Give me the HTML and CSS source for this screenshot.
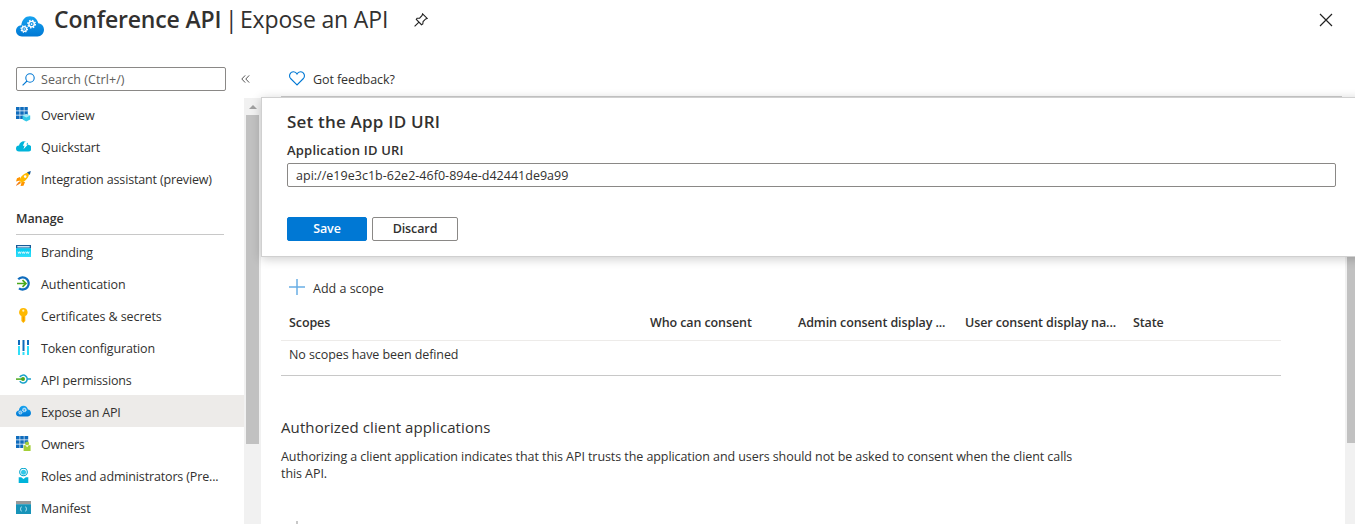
FILE: index.html
```html
<!DOCTYPE html>
<html lang="en">
<head>
<meta charset="utf-8">
<title>Conference API | Expose an API</title>
<link rel="stylesheet" href="styles.css">
</head>
<body>
<svg class="defs" width="0" height="0">
  <defs>
    <linearGradient id="cloudFill" x1="0" y1="0" x2="0" y2="1"><stop offset="0" stop-color="#16a3f0"/><stop offset="1" stop-color="#0078d4"/></linearGradient>
    <linearGradient id="cyanFill" x1="0" y1="0" x2="0" y2="1"><stop offset="0" stop-color="#00c8f0"/><stop offset="1" stop-color="#32e0fb"/></linearGradient>
    <g id="gear"><circle r="3" fill="none" stroke="#fff" stroke-width="1.5"/><circle r="4.1" fill="none" stroke="#fff" stroke-width="1.7" stroke-dasharray="1.6 1.62"/><circle r="1" fill="#fff"/></g>
  </defs>
</svg>
<header class="title-bar">
  <svg class="title-logo" width="28" height="21" viewBox="0 0 28 21">
    <path d="M6 20.5C2.7 20.5 0 18 0 14.8c0-3 2.3-5.3 5.3-5.6C5.900 3.700 9.300.3 14 .3c4.200 0 7.400 2.800 8.300 7 3.300.3 5.700 3.100 5.700 6.500 0 3.700-2.900 6.700-6.500 6.700z" fill="url(#cloudFill)"/>
    <use href="#gear" transform="translate(15.600 8.100) scale(.9)"/>
    <use href="#gear" transform="translate(8.200 13) scale(.77)"/>
  </svg>
  <h1 class="title"><span class="title-app">Conference API</span><span class="title-sep">|</span><span class="title-page">Expose an API</span></h1>
  <svg class="pin" width="14" height="14" viewBox="0 0 14 14" fill="none" stroke="#222" stroke-width="1.100"><path d="M8.600.8l4.600 4.600-1.500.5-2.600 2.600-.3 2.500-1.300.7-5.200-5.200.8-1.200 2.500-.2L8.100 2.500zM4.700 9.300L.6 13.400"/></svg>
  <svg class="close" width="14" height="14" viewBox="0 0 14 14" stroke="#222" stroke-width="1.200"><path d="M1 1l12 12M13 1L1 13"/></svg>
</header>
<div class="body">
  <aside class="sidebar">
    <div class="search-row">
      <div class="search">
        <svg width="13" height="13" viewBox="0 0 13 13" fill="none" stroke="#0078d4" stroke-width="1.100"><circle cx="8" cy="5" r="4.200"/><path d="M5 8L.6 12.400"/></svg>
        <span class="search-hint">Search (Ctrl+/)</span>
      </div>
      <svg class="collapse" width="9" height="8" viewBox="0 0 9 8" fill="none" stroke="#555"><path d="M4.200.4L.8 4l3.400 3.600M8.200.4L4.800 4l3.400 3.600"/></svg>
    </div>
    <div class="nav-wrap">
      <nav class="nav">
        <a class="item"><svg class="icon" viewBox="0 0 15 15"><path fill="#0f6cbd" d="M0 0h3.600v3.600H0zM4.200 0h3.600v3.600H4.200zM8.400 0h3.400v3.600H8.400zM0 4.200h3.600v3.600H0zM4.200 4.200h3.600v3.600H4.200zM8.400 4.200h3.400v3.600H8.400zM0 8.400h3.600V12H0zM4.200 8.400h3V12h-3z"/><path fill="#32c8e8" d="M10.300 7l3.900 1.500v4L10.300 14.600 6.600 12.500v-4z"/><path fill="#a5e8f5" d="M10.300 7l3.900 1.500-3.900 2-3.700-2z"/></svg><span>Overview</span></a>
        <a class="item"><svg class="icon" viewBox="0 0 15 15"><path fill="#00b4da" d="M3 12.500a3 3 0 010-6C3.500 3.900 5.400 2.300 8 2.300c2.300 0 4 1.500 4.400 3.700A3.200 3.200 0 0112 12.500z"/><path fill="#fff" d="M8.800 2.500l3 0-1.400 3h1.500L7.500 10.300l1-3.500H6.800z"/></svg><span>Quickstart</span></a>
        <a class="item"><svg class="icon" viewBox="0 0 15 15"><path fill="#ff9300" d="M4 6L1 7.300 0 10.500l4-1zM9 11l-1.500 3.800-3 .2 1.200-4zM3.800 10L1 14.500 5 12z"/><path fill="#ffb900" d="M3.300 9.500C5 5 8 2 13.300 1.300 13 6.200 10.400 9.700 5.600 11.800z"/><path fill="#185a97" d="M11 1.200L14.800 0l-1 4z"/><circle cx="9.200" cy="5.600" r="1.300" fill="#fff"/><path stroke="#e65c00" d="M.4 14.500l2.700-3.300"/></svg><span class="snug">Integration assistant (preview)</span></a>
        <h2 class="group">Manage</h2>
        <a class="item"><svg class="icon" viewBox="0 0 15 15"><path fill="#185a97" d="M0 1h15v3.500H0z"/><path fill="#c8e4f5" d="M1.300 2h12.400v1.500H1.300z"/><path fill="url(#cyanFill)" d="M0 4.300h15V13H0z"/><path d="M2 7.700l.8 1.800.8-1.800.8 1.800.8-1.800M6 7.700l.8 1.800.8-1.800.8 1.800.8-1.800M10 7.700l.8 1.800.8-1.800.8 1.800.8-1.800" fill="none" stroke="#fff" stroke-width=".8"/></svg><span class="snug">Branding</span></a>
        <a class="item"><svg class="icon" viewBox="0 0 15 15" fill="none"><path d="M2.200 3.200A6.100 6.100 0 1 1 3 12.300" stroke="#0f6cbd" stroke-width="2.300"/><path d="M1 7.500h8.600M6.500 4.200l3.400 3.300-3.400 3.300" stroke="#4aa81c" stroke-width="1.700"/></svg><span>Authentication</span></a>
        <a class="item"><svg class="icon" viewBox="0 0 15 15"><path fill="#ffb900" d="M7.300 0a4.300 4.300 0 00-1.900 8.100v5l1.900 1.900 2-2V8.100A4.300 4.300 0 007.300 0z"/><circle cx="7.300" cy="2.700" r="1.100" fill="#fff3c4"/><path stroke="#ef9400" d="M7.300 8.500v5"/></svg><span>Certificates &amp; secrets</span></a>
        <a class="item"><svg class="icon" viewBox="0 0 15 15"><path fill="#0f6cbd" d="M2 0h2v5H2zM6.500 0h2v11h-2zM11 0h2v5h-2z"/><path fill="#32dff8" d="M2 6h2v9H2zM6.500 12h2v3h-2zM11 6h2v9h-2z"/></svg><span class="snug">Token configuration</span></a>
        <a class="item"><svg class="icon" viewBox="0 0 15 15" fill="none"><path d="M3.800 5A4 4 0 1 1 3.800 9.200M11.200 7.100H15" stroke="#1aa3cc" stroke-width="1.500"/><path d="M0 7.100h7" stroke="#4aa81c" stroke-width="1.500"/><circle cx="7" cy="7.100" r="2" fill="#4aa81c"/></svg><span class="snug">API permissions</span></a>
        <a class="item selected"><svg class="icon" viewBox="0 0 28 28"><path transform="translate(0 3)" d="M6 20.500C2.700 20.500 0 18 0 14.800c0-3 2.300-5.300 5.300-5.600C5.900 3.700 9.300.3 14 .3c4.200 0 7.400 2.800 8.300 7 3.300.3 5.700 3.100 5.700 6.500 0 3.700-2.900 6.700-6.500 6.700z" fill="url(#cloudFill)"/><use href="#gear" transform="translate(15.600 11.100) scale(.9)"/><use href="#gear" transform="translate(8.200 16) scale(.77)"/></svg><span class="snug">Expose an API</span></a>
        <a class="item"><svg class="icon" viewBox="0 0 15 15"><path fill="#0f6cbd" d="M0 0h3.600v3.600H0zM4.200 0h3.600v3.600H4.200zM8.400 0h3.800v3.600H8.400zM0 4.200h3.600v3.600H0zM4.200 4.200h3.600v3.600H4.200zM8.400 4.200h3.800v3.600H8.400zM0 8.400h3.600V12H0zM4.200 8.400h3V12h-3z"/><path fill="#a4cf37" d="M7.600 9.200h7V15h-7z"/><circle cx="11.100" cy="7.500" r="2" fill="#a4cf37"/><path fill="#fff" d="M9.500 9.300h3.200l-1.600 2z"/></svg><span class="tight">Owners</span></a>
        <a class="item"><svg class="icon" viewBox="0 0 15 15"><circle cx="7.500" cy="4" r="3.800" fill="none" stroke="#00a5cc" stroke-width="1.100"/><circle cx="7.500" cy="4.200" r="2.500" fill="#32c8e8"/><path fill="#00b4da" d="M2.700 9.200h2.500L7.500 11l2.300-1.800h2.500V15H2.700z"/></svg><span class="snug">Roles and administrators (Pre...</span></a>
        <a class="item"><svg class="icon" viewBox="0 0 15 15"><path fill="#999" d="M0 1h15v3.200H0z"/><path fill="#1793b8" d="M0 4.200h15V14H0z"/><path d="M5.500 6.800c-1 0-.3 2-1.300 2.200 1 .2.300 2.200 1.300 2.200M9.500 6.800c1 0 .3 2 1.300 2.200-1 .2-.3 2.200-1.300 2.200" fill="none" stroke="#c5eefa"/></svg><span class="snug">Manifest</span></a>
      </nav>
      <div class="scrollbar"><span class="scroll-up"></span><span class="thumb"></span></div>
    </div>
  </aside>
  <main class="main">
    <div class="toolbar">
      <svg width="16" height="15" viewBox="0 0 16 15" fill="none" stroke="#0078d4" stroke-width="1.100"><path d="M8 13.900L1.600 7.500C-.4 5.300.7.700 4.500.7 6.200.7 7.400 1.700 8 2.900 8.600 1.700 9.800.7 11.500.7c3.800 0 4.900 4.600 2.900 6.800z"/></svg>
      <span class="feedback">Got feedback?</span>
    </div>
    <div class="scroll-area">
      <div class="content">
        <div class="add-scope">
          <svg width="16" height="16" viewBox="0 0 16 16" stroke="#69aee5" stroke-width="1.500"><path d="M8 0v16M0 8h16"/></svg>
          <span class="add-label">Add a scope</span>
        </div>
        <div class="table">
          <div class="table-head"><span>Scopes</span><span>Who can consent</span><span>Admin consent display ...</span><span>User consent display na...</span><span>State</span></div>
          <div class="table-row"><span>No scopes have been defined</span></div>
        </div>
        <h2 class="section-title">Authorized client applications</h2>
        <p class="section-text"><span>Authorizing a client application indicates that this API trusts the application and users should not be asked to consent when the client calls<br>this API.</span></p>
        <div class="next-plus"></div>
      </div>
      <div class="main-scrollbar"><div class="main-thumb"></div></div>
    </div>
  </main>
</div>
<section class="dialog">
  <h2 class="dialog-title">Set the App ID URI</h2>
  <label class="dialog-label">Application ID URI</label>
  <div class="uri"><span>api://e19e3c1b-62e2-46f0-894e-d42441de9a99</span></div>
  <div class="buttons"><button class="btn save">Save</button><button class="btn discard">Discard</button></div>
</section>
</body>
</html>
```
FILE: styles.css
```css
* { box-sizing: border-box; }
body { margin: 0; width: 1355px; height: 524px; overflow: hidden; position: relative; background: #fff; color: #323130; font: 12.5px/18px "Open Sans", "Noto Sans", sans-serif; letter-spacing: -0.08px; }
h1, h2, p { margin: 0; font-weight: 400; }
span { white-space: nowrap; }
svg { flex: none; display: block; }
.defs { position: absolute; }
.title-bar { height: 60px; display: flex; align-items: flex-start; padding: 0 23px 0 16px; }
.title-logo { margin-top: 16px; }
.title { display: flex; margin: 3px 0 0 10px; font-size: 23px; line-height: 32px; letter-spacing: -0.16px; }
.title-app { font-weight: 600; width: 171px; }
.title-sep { width: 15px; }
.title-page { width: 149px; }
.pin { margin: 13px 0 0 25px; }
.close { margin: 13px -1px 0 auto; }
.body { display: flex; height: 464px; }
.sidebar { width: 261px; display: flex; flex-direction: column; }
.search-row { display: flex; align-items: center; padding: 7px 0 7px 16px; height: 38px; }
.search { width: 210px; height: 24px; border: 1px solid #8a8886; border-radius: 2px; display: flex; align-items: center; padding-left: 5px; gap: 6px; color: #605e5c; letter-spacing: 0.07px; }
.search-hint { padding-top: 2px; }
.collapse { margin-left: 15px; }
.nav-wrap { flex: 1; display: flex; min-height: 0; }
.nav { width: 244px; overflow: hidden; }
.item { display: flex; height: 32px; align-items: center; gap: 10px; padding-left: 16px; }
.item span { padding-top: 4px; }
.item .snug { letter-spacing: -0.15px; }
.item .tight { letter-spacing: -0.3px; }
.icon { width: 15px; height: 15px; }
.selected { background: #edebe9; }
.group { height: 41px; margin: 0 20px 0 16px; padding-top: 16px; border-bottom: 1px solid #c8c8c8; font-size: 12.5px; font-weight: 600; }
.scrollbar { width: 17px; background: #f1f1f1; display: flex; flex-direction: column; align-items: center; }
.scroll-up { border: 4px solid transparent; border-top: 0; border-bottom: 4px solid #a0a0a0; margin: 7px 0 6px; }
.thumb { width: 13px; height: 329px; background: #c1c1c1; }
.main { flex: 1; display: flex; flex-direction: column; min-width: 0; }
.toolbar { height: 37px; margin: 0 13px 0 20px; border-bottom: 1px solid #ccc; display: flex; align-items: center; gap: 8px; padding-left: 8px; }
.feedback { padding-top: 4px; }
.scroll-area { flex: 1; display: flex; min-height: 0; }
.content { flex: 1; padding: 182px 64px 0 20px; }
.add-scope { display: flex; align-items: center; height: 18px; gap: 8px; padding-left: 8px; }
.add-scope svg { margin-top: -3px; }
.add-label { padding-top: 2px; letter-spacing: 0; }
.table { padding-top: 8px; }
.table-head { display: grid; grid-template-columns: 361px 148px 167px 168px 1fr; height: 36px; align-items: center; padding-left: 8px; font-weight: 600; letter-spacing: -0.1px; border-bottom: 1px solid #edebe9; }
.table-row { height: 35px; padding: 5px 8px; letter-spacing: -0.08px; border-bottom: 1px solid #c8c8c8; }
.section-title { font-size: 15px; line-height: 22px; margin-top: 40px; letter-spacing: 0.1px; }
.section-text { line-height: 17px; margin-top: 10px; letter-spacing: -0.075px; }
.next-plus { width: 2px; height: 3px; background: #c8c8c8; margin: 39px 0 0 15px; }
.main-scrollbar { width: 10px; background: #f1f1f1; padding-left: 2px; }
.main-thumb { height: 346px; background: #c1c1c1; }
.dialog { position: absolute; left: 261px; top: 97px; width: 1104px; height: 160px; background: #fff; border: 1px solid #d0d0d0; box-shadow: 0 2px 10px rgba(0,0,0,.2); padding: 12px 28px 0 25px; }
.dialog-title { font-size: 17px; font-weight: 600; line-height: 24px; letter-spacing: 0.2px; }
.dialog-label { display: block; font-size: 13px; font-weight: 600; margin-top: 7px; height: 22px; letter-spacing: 0.2px; }
.uri { width: 1049px; height: 24px; border: 1px solid #8a8886; border-radius: 2px; padding: 3px 8px; letter-spacing: 0.02px; }
.buttons { display: flex; gap: 5px; margin-top: 30px; }
.btn { height: 24px; padding: 0; border-radius: 2px; border: 1px solid #8a8886; background: #fff; color: #323130; font: 600 12.5px/20px "Open Sans", "Noto Sans", sans-serif; letter-spacing: -0.1px; }
.save { width: 80px; background: #0078d4; border-color: #0078d4; color: #fff; }
.discard { width: 86px; }
```
